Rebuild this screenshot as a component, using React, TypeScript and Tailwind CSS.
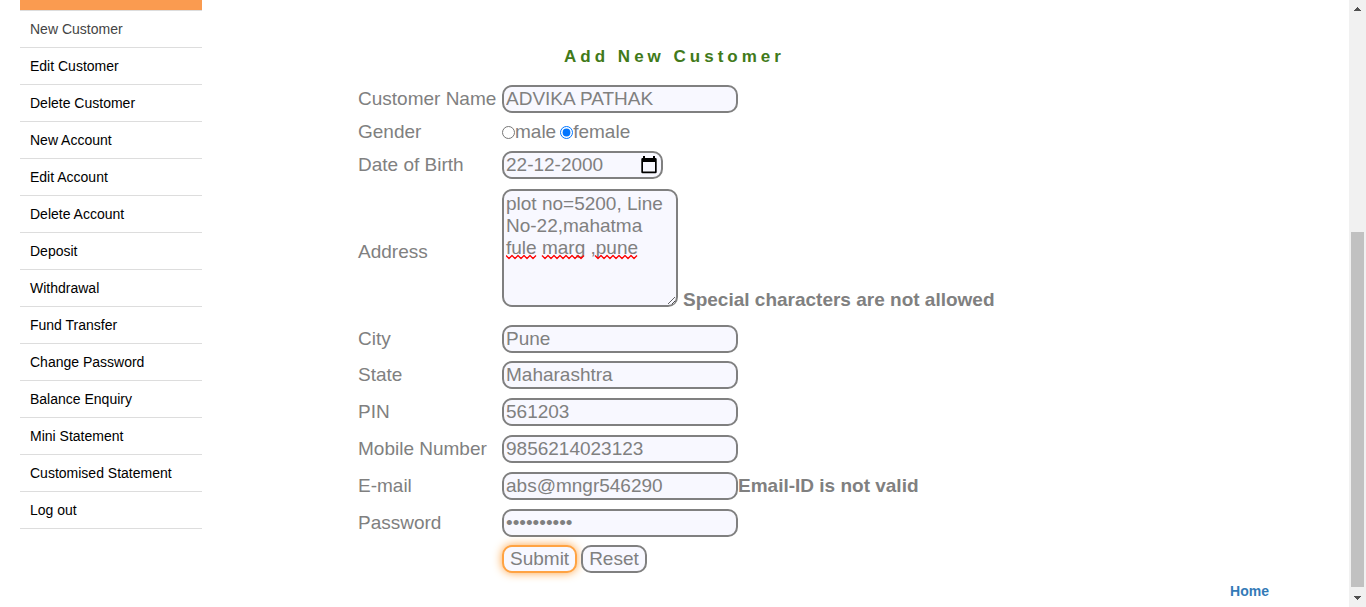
import { useState, type ReactNode } from "react";

const menu = [
  "New Customer",
  "Edit Customer",
  "Delete Customer",
  "New Account",
  "Edit Account",
  "Delete Account",
  "Deposit",
  "Withdrawal",
  "Fund Transfer",
  "Change Password",
  "Balance Enquiry",
  "Mini Statement",
  "Customised Statement",
  "Log out",
];

const box = "rounded-[10px] border-2 border-[#808080] bg-[#f8f8ff]";
const field = `${box} h-7 w-[236px] px-0.5 outline-none`;

function Row({
  label,
  htmlFor,
  size = "h-9",
  children,
}: {
  label?: string;
  htmlFor?: string;
  size?: string;
  children: ReactNode;
}) {
  return (
    <div className={`flex items-center ${size}`}>
      <div className="w-36 shrink-0">{label && <label htmlFor={htmlFor}>{label}</label>}</div>
      {children}
    </div>
  );
}

/* Wavy underline shown below a misspelt word */
function Squiggle({ x, width }: { x: number; width: number }) {
  let d = `M${x} 1.500`;
  for (let i = 3, down = true; i <= width; i += 3, down = !down) {
    d += ` L${x + i} ${down ? 4.5 : 1.5}`;
  }
  return <path d={d} fill="none" stroke="#ff0000" strokeWidth="1.300" strokeLinejoin="round" />;
}

function Sidebar() {
  return (
    <nav className="pl-5">
      <div className="h-[11px] border-b border-[#dddddd] bg-[#fa9b50]" />
      <ul className="text-sm">
        {menu.map((item, i) => (
          <li key={item} className="border-b border-[#dddddd]">
            <a href="#" className={`block px-2.5 py-2 leading-5 ${i === 0 ? "text-[#444444]" : "text-black"}`}>
              {item}
            </a>
          </li>
        ))}
      </ul>
    </nav>
  );
}

function CustomerForm() {
  const [gender, setGender] = useState("female");
  return (
    <form className="mx-auto w-[633px] max-w-full text-[19px] leading-[22px] whitespace-nowrap text-[#808080]">
      <Row label="Customer Name" htmlFor="name">
        <input id="name" className={field} defaultValue="ADVIKA PATHAK" />
      </Row>
      <Row label="Gender" size="h-[30px]">
        <div className="flex items-center gap-1">
          {["male", "female"].map((g) => (
            <label key={g} className="flex items-center">
              <input
                type="radio"
                name="gender"
                className="size-[13px]"
                checked={gender === g}
                onChange={() => setGender(g)}
              />
              {g}
            </label>
          ))}
        </div>
      </Row>
      <Row label="Date of Birth" htmlFor="dob">
        <div className={`${box} flex h-7 w-[161px] items-center justify-between pr-1`}>
          <input id="dob" className="w-32 px-0.5 outline-none" defaultValue="22-12-2000" />
          <button type="button" aria-label="Open calendar" className="shrink-0">
            <svg width="16" height="18" viewBox="0 0 16 18" className="block">
              <path
                fill="#000"
                fillRule="evenodd"
                d="M2 0h2v2h8V0h2v2h.5a1.200 1.200 0 0 1 1.200 1.200v12.800a1.200 1.200 0 0 1-1.200 1.200h-13a1.200 1.200 0 0 1-1.200-1.200V3.200a1.200 1.200 0 0 1 1.200-1.200H2zM2 6v9.500h12V6z"
              />
            </svg>
          </button>
        </div>
      </Row>
      <Row label="Address" htmlFor="address" size="h-[138px]">
        <div className="flex items-end gap-[5px] pb-2">
          <div className="relative">
            <textarea
              id="address"
              spellCheck={false}
              className={`${box} block h-[118px] w-44 p-0.5 whitespace-pre-wrap outline-none`}
              defaultValue={"plot no=5200, Line\nNo-22,mahatma\nfule marg ,pune"}
            />
            <svg width="140" height="6" className="pointer-events-none absolute top-[65px] left-1">
              <Squiggle x={0} width={30} />
              <Squiggle x={36} width={42} />
              <Squiggle x={89} width={42} />
            </svg>
          </div>
          <span className="leading-[14px] font-bold">Special characters are not allowed</span>
        </div>
      </Row>
      <Row label="City" htmlFor="city">
        <input id="city" className={field} defaultValue="Pune" />
      </Row>
      <Row label="State" htmlFor="state">
        <input id="state" className={field} defaultValue="Maharashtra" />
      </Row>
      <Row label="PIN" htmlFor="pin" size="h-[37px]">
        <input id="pin" className={field} defaultValue="561203" />
      </Row>
      <Row label="Mobile Number" htmlFor="mobile" size="h-[37px]">
        <input id="mobile" className={field} defaultValue="9856214023123" />
      </Row>
      <Row label="E-mail" htmlFor="email" size="h-[37px]">
        <input id="email" className={field} defaultValue="abs@mngr546290" />
        <span className="font-bold">Email-ID is not valid</span>
      </Row>
      <Row label="Password" htmlFor="password" size="h-[37px]">
        <input id="password" type="password" className={field} defaultValue="customer22" />
      </Row>
      <Row>
        <div className="flex gap-1">
          <button
            type="button"
            className="h-7 rounded-[10px] border-2 border-[#ffa343] bg-[#f8f8ff] px-1.5 shadow-[0_0_10px_#ffa343]"
          >
            Submit
          </button>
          <button type="reset" className={`${box} h-7 px-1.5`}>
            Reset
          </button>
        </div>
      </Row>
    </form>
  );
}

function Scrollbar() {
  return (
    <div aria-hidden="true" className="sticky top-0 flex h-screen w-[17px] shrink-0 flex-col items-center bg-[#f1f1f1]">
      <svg width="17" height="17" className="shrink-0">
        <path d="M5 11h7v-1h-1v-1h-1v-1h-1v-1h-1v1h-1v1h-1v1h-1z" fill="#505050" />
      </svg>
      <div className="flex-215" />
      <div className="w-[13px] flex-355 bg-[#c1c1c1]" />
      <div className="h-[3px]" />
      <svg width="17" height="17" className="shrink-0">
        <path d="M5 6h7v1h-1v1h-1v1h-1v1h-1v-1h-1v-1h-1v-1h-1z" fill="#505050" />
      </svg>
    </div>
  );
}

export default function App() {
  return (
    <div className="flex bg-white font-['Liberation_Sans',Arial,sans-serif]">
      <div className="grid min-h-screen flex-1 grid-cols-[202px_minmax(0,1fr)_202px]">
        <Sidebar />
        <main>
          <h1 className="pt-[45px] pb-3 text-center text-[17px] leading-6 font-bold tracking-[4px] text-[#417a1a]">
            Add New Customer
          </h1>
          <CustomerForm />
        </main>
        <div className="self-end pr-20 pb-1 text-right">
          <a href="#" className="text-sm font-bold text-[#337ab7]">
            Home
          </a>
        </div>
      </div>
      <Scrollbar />
    </div>
  );
}
